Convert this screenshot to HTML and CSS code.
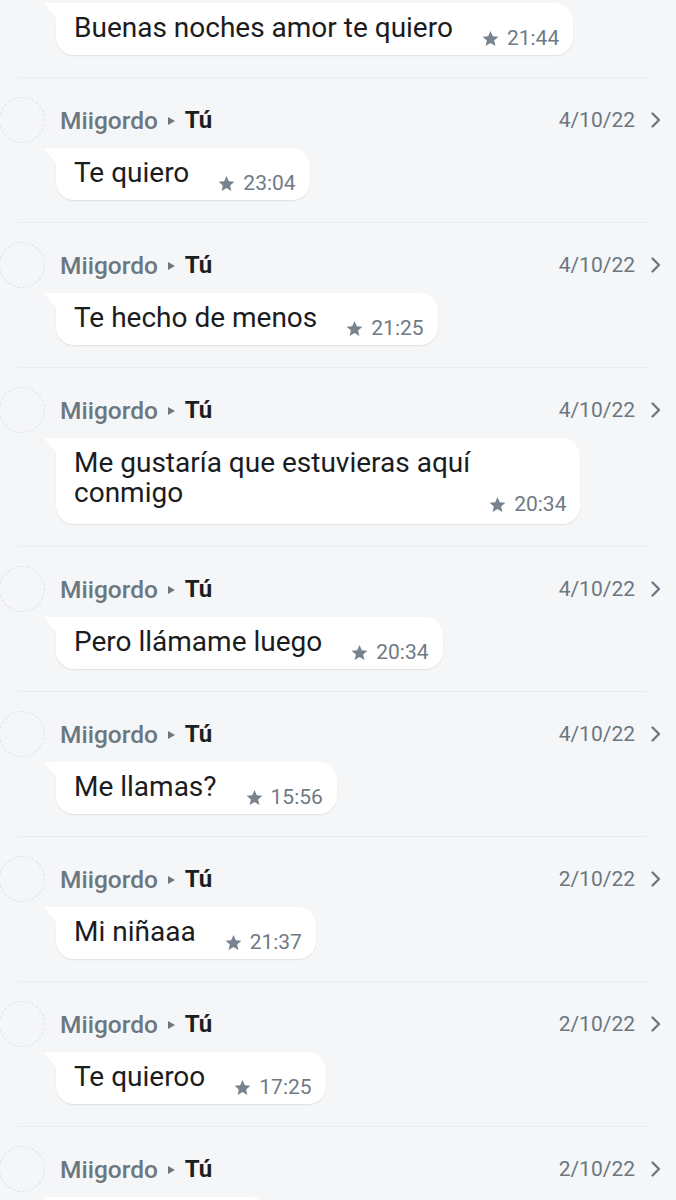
FILE: index.html
```html
<!DOCTYPE html>
<html lang="es">
<head>
<meta charset="utf-8">
<title>Mensajes destacados</title>
<link rel="stylesheet" href="styles.css">
</head>
<body>
<div class="list">
  <div class="item item--first">
    <div class="bubble"><span class="text">Buenas noches amor te quiero</span><span class="meta"><svg class="star" viewBox="0 0 24 24"><path d="M12 2.5l2.9 6.6 7.1.6-5.4 4.7 1.6 7-6.2-3.7-6.2 3.7 1.6-7L2 9.7l7.1-.6z"/></svg>21:44</span></div>
  </div>
  <div class="sep"></div>

  <div class="item">
    <div class="head"><span class="avatar"></span><span class="name">Miigordo</span><span class="arrow"></span><span class="to">Tú</span><span class="date">4/10/22</span><svg class="chev" viewBox="0 0 12 18"><path d="M2.5 2.5l6.5 6.5-6.5 6.5"/></svg></div>
    <div class="bubble"><span class="text">Te quiero</span><span class="meta"><svg class="star" viewBox="0 0 24 24"><path d="M12 2.5l2.9 6.6 7.1.6-5.4 4.7 1.6 7-6.2-3.7-6.2 3.7 1.6-7L2 9.7l7.1-.6z"/></svg>23:04</span></div>
  </div>
  <div class="sep"></div>

  <div class="item">
    <div class="head"><span class="avatar"></span><span class="name">Miigordo</span><span class="arrow"></span><span class="to">Tú</span><span class="date">4/10/22</span><svg class="chev" viewBox="0 0 12 18"><path d="M2.5 2.5l6.5 6.5-6.5 6.5"/></svg></div>
    <div class="bubble"><span class="text">Te hecho de menos</span><span class="meta"><svg class="star" viewBox="0 0 24 24"><path d="M12 2.5l2.9 6.6 7.1.6-5.4 4.7 1.6 7-6.2-3.7-6.2 3.7 1.6-7L2 9.7l7.1-.6z"/></svg>21:25</span></div>
  </div>
  <div class="sep"></div>

  <div class="item">
    <div class="head"><span class="avatar"></span><span class="name">Miigordo</span><span class="arrow"></span><span class="to">Tú</span><span class="date">4/10/22</span><svg class="chev" viewBox="0 0 12 18"><path d="M2.5 2.5l6.5 6.5-6.5 6.5"/></svg></div>
    <div class="bubble bubble--wrap"><span class="text">Me gustaría que estuvieras aquí<br>conmigo</span><span class="meta"><svg class="star" viewBox="0 0 24 24"><path d="M12 2.5l2.9 6.6 7.1.6-5.4 4.7 1.6 7-6.2-3.7-6.2 3.7 1.6-7L2 9.7l7.1-.6z"/></svg>20:34</span></div>
  </div>
  <div class="sep"></div>

  <div class="item">
    <div class="head"><span class="avatar"></span><span class="name">Miigordo</span><span class="arrow"></span><span class="to">Tú</span><span class="date">4/10/22</span><svg class="chev" viewBox="0 0 12 18"><path d="M2.5 2.5l6.5 6.5-6.5 6.5"/></svg></div>
    <div class="bubble"><span class="text">Pero llámame luego</span><span class="meta"><svg class="star" viewBox="0 0 24 24"><path d="M12 2.5l2.9 6.6 7.1.6-5.4 4.7 1.6 7-6.2-3.7-6.2 3.7 1.6-7L2 9.7l7.1-.6z"/></svg>20:34</span></div>
  </div>
  <div class="sep"></div>

  <div class="item">
    <div class="head"><span class="avatar"></span><span class="name">Miigordo</span><span class="arrow"></span><span class="to">Tú</span><span class="date">4/10/22</span><svg class="chev" viewBox="0 0 12 18"><path d="M2.5 2.5l6.5 6.5-6.5 6.5"/></svg></div>
    <div class="bubble"><span class="text">Me llamas?</span><span class="meta"><svg class="star" viewBox="0 0 24 24"><path d="M12 2.5l2.9 6.6 7.1.6-5.4 4.7 1.6 7-6.2-3.7-6.2 3.7 1.6-7L2 9.7l7.1-.6z"/></svg>15:56</span></div>
  </div>
  <div class="sep"></div>

  <div class="item">
    <div class="head"><span class="avatar"></span><span class="name">Miigordo</span><span class="arrow"></span><span class="to">Tú</span><span class="date">2/10/22</span><svg class="chev" viewBox="0 0 12 18"><path d="M2.5 2.5l6.5 6.5-6.5 6.5"/></svg></div>
    <div class="bubble"><span class="text">Mi niñaaa</span><span class="meta"><svg class="star" viewBox="0 0 24 24"><path d="M12 2.5l2.9 6.6 7.1.6-5.4 4.7 1.6 7-6.2-3.7-6.2 3.7 1.6-7L2 9.7l7.1-.6z"/></svg>21:37</span></div>
  </div>
  <div class="sep"></div>

  <div class="item">
    <div class="head"><span class="avatar"></span><span class="name">Miigordo</span><span class="arrow"></span><span class="to">Tú</span><span class="date">2/10/22</span><svg class="chev" viewBox="0 0 12 18"><path d="M2.5 2.5l6.5 6.5-6.5 6.5"/></svg></div>
    <div class="bubble"><span class="text">Te quieroo</span><span class="meta"><svg class="star" viewBox="0 0 24 24"><path d="M12 2.5l2.9 6.6 7.1.6-5.4 4.7 1.6 7-6.2-3.7-6.2 3.7 1.6-7L2 9.7l7.1-.6z"/></svg>17:25</span></div>
  </div>
  <div class="sep"></div>

  <div class="item">
    <div class="head"><span class="avatar"></span><span class="name">Miigordo</span><span class="arrow"></span><span class="to">Tú</span><span class="date">2/10/22</span><svg class="chev" viewBox="0 0 12 18"><path d="M2.5 2.5l6.5 6.5-6.5 6.5"/></svg></div>
    <div class="bubble bubble--empty"></div>
  </div>
</div>
</body>
</html>
```

FILE: styles.css
```css
html, body {
  margin: 0;
  padding: 0;
  background: #f5f6f8;
}

body {
  font-family: Roboto, "Noto Sans", "Liberation Sans", sans-serif;
  color: #1b1c1e;
  overflow: hidden;
  height: 1200px;
}

.list {
  display: flex;
  flex-direction: column;
}

.item {
  display: flex;
  flex-direction: column;
  align-items: flex-start;
  padding: 18px 0 22px 0;
}

.item--first {
  padding-top: 3px;
  padding-bottom: 22px;
}

.sep {
  height: 1px;
  background: #e9ebee;
  margin: 0 29px 0 18px;
}

.head {
  display: flex;
  align-items: center;
  align-self: stretch;
  height: 48px;
  margin-bottom: 4px;
}

.avatar {
  width: 46px;
  height: 46px;
  box-sizing: border-box;
  border-radius: 50%;
  border: 1px dashed #dde0e3;
  margin-left: -1px;
  margin-right: 15px;
  flex: none;
}

.name {
  font-size: 24.5px;
  font-weight: 500;
  color: #6c7780;
}

.arrow {
  width: 0;
  height: 0;
  border-top: 4px solid transparent;
  border-bottom: 4px solid transparent;
  border-left: 7px solid #6c7780;
  margin: 2px 10px 0 10px;
}

.to {
  font-size: 24px;
  font-weight: 700;
  color: #1d1e20;
}

.date {
  margin-left: auto;
  font-size: 21px;
  color: #6c7680;
}

.chev {
  width: 12px;
  height: 18px;
  margin: 0 14px 0 15px;
  fill: none;
  stroke: #6f7982;
  stroke-width: 2.4;
  stroke-linecap: round;
  stroke-linejoin: round;
}

.bubble {
  position: relative;
  display: flex;
  align-items: flex-end;
  gap: 28px;
  margin-left: 56px;
  padding: 10px 14px 6px 18px;
  background: #ffffff;
  border-radius: 0 18px 18px 18px;
  box-shadow: 0 1px 1.5px rgba(0, 0, 0, 0.09);
}

.bubble::before {
  content: "";
  position: absolute;
  left: -12px;
  top: 0;
  width: 13px;
  height: 16px;
  background: #ffffff;
  clip-path: polygon(0 0, 100% 0, 100% 100%);
}

.bubble--wrap {
  gap: 18px;
  padding-bottom: 9px;
}

.bubble--wrap .text {
  margin-bottom: 7px;
}

.bubble--empty {
  width: 180px;
  height: 36px;
}

.text {
  font-size: 28px;
  line-height: 30px;
  margin-bottom: 6px;
  color: #1b1c1e;
}

.meta {
  display: flex;
  align-items: center;
  gap: 7px;
  font-size: 21px;
  line-height: 22px;
  color: #6f7a84;
  white-space: nowrap;
}

.star {
  width: 19px;
  height: 19px;
  fill: #77838e;
}
```
